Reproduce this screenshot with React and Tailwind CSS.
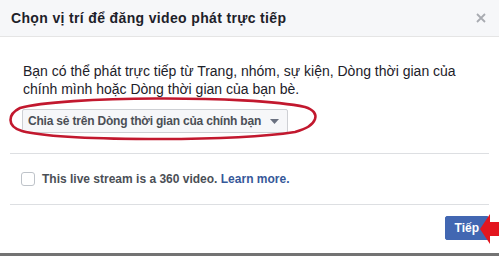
// App.jsx
const App = () => {
  return (
    <div
      className="relative w-[499px] h-[256px] overflow-hidden bg-[#737373]"
      style={{ fontFamily: '"Liberation Sans", Arial, Helvetica, sans-serif' }}
    >
      <div className="w-[499px] h-[253px] bg-white flex flex-col">
        {/* Header */}
        <div className="h-[37px] flex items-center justify-between bg-[#f6f7f9] border-b border-[#e5e5e5] pl-[11px] pr-[13px]">
          <h3 className="text-[14px] font-bold text-[#1d2129] leading-none tracking-[0.35px]">
            Chọn vị trí để đăng video phát trực tiếp
          </h3>
          <svg width="10" height="10" viewBox="0 0 10 10" className="text-[#a8abb1]">
            <path d="M1 1L9 9M9 1L1 9" stroke="currentColor" strokeWidth="1.8" />
          </svg>
        </div>

        {/* Body */}
        <div className="mx-[10px] border-b border-[#dddfe2] pl-[13px] pt-[25px] pb-[20px]">
          <p className="text-[14px] leading-[18px] text-[#1d2129] whitespace-nowrap">
            Bạn có thể phát trực tiếp từ Trang, nhóm, sự kiện, Dòng thời gian của
            <br />
            chính mình hoặc Dòng thời gian của bạn bè.
          </p>
          <button className="mt-[11px] -ml-[1px] h-[24px] inline-flex items-center gap-[9px] pl-[5px] pr-[8px] bg-[#f6f7f9] border border-[#ced0d4] rounded-[2px] whitespace-nowrap">
            <span className="text-[12px] font-bold text-[#4b4f56] tracking-[-0.2px]">
              Chia sẻ trên Dòng thời gian của chính bạn
            </span>
            <svg width="9" height="5" viewBox="0 0 9 5">
              <path d="M0 0H9L4.5 5Z" fill="#6a7180" />
            </svg>
          </button>
        </div>

        {/* 360 option */}
        <div className="mx-[10px] border-b border-[#dddfe2] h-[51px] flex items-center pl-[11px] gap-[7px]">
          <span className="w-[14px] h-[14px] border border-[#bec3c9] rounded-[3px] bg-white" />
          <span className="text-[12px] font-bold text-[#4b4f56]">
            This live stream is a 360 video.{' '}
            <span className="text-[#365899]">Learn more.</span>
          </span>
        </div>

        {/* Footer */}
        <div className="mx-[10px] flex justify-end pt-[11px]">
          <button className="h-[24px] px-[9px] bg-[#4267b2] border border-[#4267b2] rounded-[2px] text-white text-[12px] font-bold">
            Tiếp
          </button>
        </div>
      </div>

      {/* Annotations drawn over the dialog */}
      <svg className="absolute left-0 top-0 pointer-events-none" width="499" height="256">
        <path
          d="M20 108 C 60 96, 250 95, 305 107 C 322 112, 318 126, 295 132 C 230 142, 60 141, 22 131 C 6 126, 8 114, 20 108 Z"
          fill="none"
          stroke="#c2182e"
          strokeWidth="2.6"
        />
        <path d="M480 229 L490 214 L490 222 L499 222 L499 236 L490 236 L490 244 Z" fill="#e3161f" />
      </svg>
    </div>
  );
};

export default App;
